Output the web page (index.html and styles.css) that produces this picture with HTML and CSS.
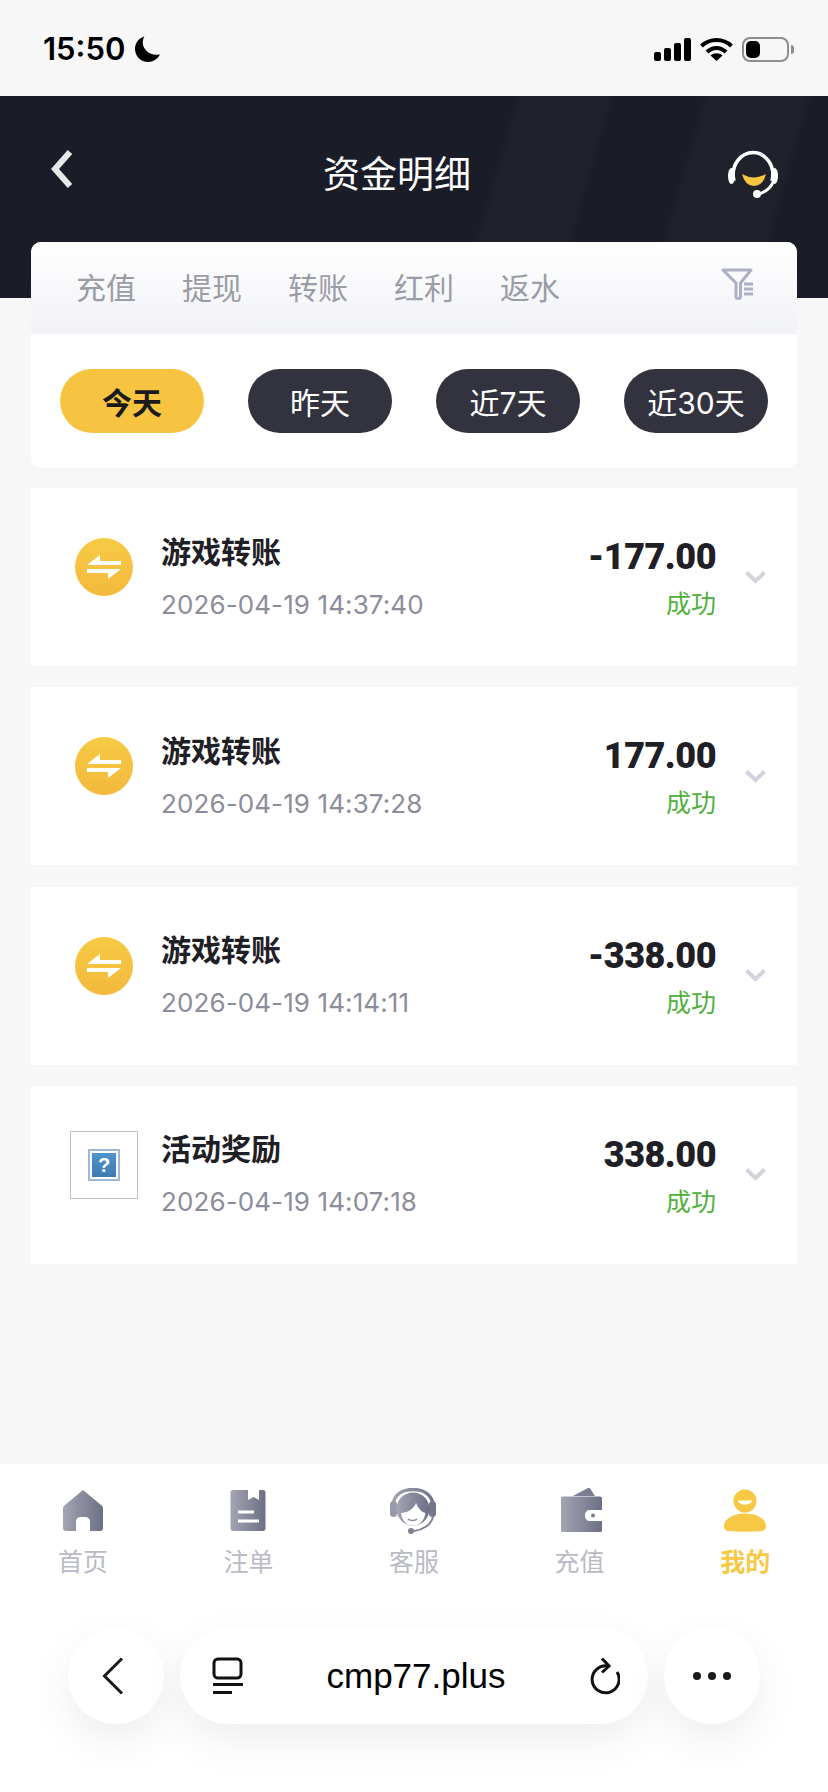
FILE: index.html
```html
<!DOCTYPE html>
<html>
  <head>
    <title>资金明细</title>
    <link rel="stylesheet" href="styles.css">
  </head>
  <body>
    <div class="status-bar">
      <div class="status-left">
        <span class="status-time">15:50</span>
        <svg class="moon" width="26" height="26" viewBox="0 0 25 25"><path d="M9 0.5C3.8 2 0 6.8 0 12.5 0 19.4 5.6 25 12.5 25 17.6 25 22 22 24 17.6 15.5 20 7.5 13.5 7.5 6.5 7.5 4.3 8 2.3 9 0.5Z" fill="#000"/></svg>
      </div>
      <div class="status-right">
        <svg width="37" height="23" viewBox="0 0 37 23" fill="#000"><rect x="0" y="14" width="7" height="9" rx="2"/><rect x="10" y="10" width="7" height="13" rx="2"/><rect x="20" y="5" width="7" height="18" rx="2"/><rect x="30" y="0" width="7" height="23" rx="2"/></svg>
        <svg width="33" height="24" viewBox="0 0 33 24" fill="none" stroke="#000" stroke-width="4"><path d="M1.5 9C10 1 23 1 31.5 9"/><path d="M7 15C12.5 9.5 20.5 9.5 26 15"/><path d="M16.5 24L10.5 18.5C14 15.5 19 15.5 22.5 18.5Z" fill="#000" stroke="none"/></svg>
        <div class="battery-wrap">
          <div class="battery"><div class="battery-fill"></div></div>
          <div class="battery-tip"></div>
        </div>
      </div>
    </div>

    <div class="top-header">
      <svg width="24" height="38" viewBox="0 0 24 38" fill="none" stroke="#e8e8e8" stroke-width="6"><path d="M20 2L5 19L20 36"/></svg>
      <div class="top-title">资金明细</div>
      <svg width="50" height="48" viewBox="0 0 50 48" fill="none">
        <path d="M6 31C2 14 14 2.5 25 2.5S48 14 44 31" stroke="#fff" stroke-width="3.5"/>
        <ellipse cx="3.5" cy="26" rx="3.5" ry="8" fill="#fff"/>
        <ellipse cx="46.5" cy="26" rx="3.5" ry="8" fill="#fff"/>
        <path d="M45 32C43 38 37 42 31 44" stroke="#fff" stroke-width="3"/>
        <circle cx="29" cy="44" r="4" fill="#fff"/>
        <path d="M14 24Q26 31 38 24Q35 36 26 36Q17 36 14 24Z" fill="#f7c441"/>
      </svg>
    </div>

    <div class="filter-card">
      <div class="tabs">
        <span class="tab">充值</span>
        <span class="tab">提现</span>
        <span class="tab">转账</span>
        <span class="tab">红利</span>
        <span class="tab">返水</span>
        <svg class="filter-icon" width="32" height="32" viewBox="0 0 32 32" fill="none" stroke="#adb0c2" stroke-width="3"><path d="M2 2H30L19.5 15V29C19.5 31 15 31 15 29V15Z" stroke-linejoin="round"/><path d="M23 16H32M23 21H32M23 26H32"/></svg>
      </div>
      <div class="pills">
        <span class="pill active">今天</span>
        <span class="pill">昨天</span>
        <span class="pill">近7天</span>
        <span class="pill">近30天</span>
      </div>
    </div>

    <div class="record-list">
      <div class="record">
        <div class="record-icon"><div class="coin"><svg width="34" height="24" viewBox="0 0 34 24" fill="#fff"><path d="M0 10L13 0V6H34V10Z"/><path d="M34 14L21 24V18H0V14Z"/></svg></div></div>
        <div class="record-info">
          <div class="record-name">游戏转账</div>
          <div class="record-date">2026-04-19 14:37:40</div>
        </div>
        <div class="record-money">
          <div class="amount">-177.00</div>
          <div class="state">成功</div>
        </div>
        <svg class="chevron" width="21" height="13" viewBox="0 0 21 13" fill="none" stroke="#d3d3de" stroke-width="4"><path d="M1.5 1.5L10.5 10L19.5 1.5"/></svg>
      </div>
      <div class="record">
        <div class="record-icon"><div class="coin"><svg width="34" height="24" viewBox="0 0 34 24" fill="#fff"><path d="M0 10L13 0V6H34V10Z"/><path d="M34 14L21 24V18H0V14Z"/></svg></div></div>
        <div class="record-info">
          <div class="record-name">游戏转账</div>
          <div class="record-date">2026-04-19 14:37:28</div>
        </div>
        <div class="record-money">
          <div class="amount">177.00</div>
          <div class="state">成功</div>
        </div>
        <svg class="chevron" width="21" height="13" viewBox="0 0 21 13" fill="none" stroke="#d3d3de" stroke-width="4"><path d="M1.5 1.5L10.5 10L19.5 1.5"/></svg>
      </div>
      <div class="record">
        <div class="record-icon"><div class="coin"><svg width="34" height="24" viewBox="0 0 34 24" fill="#fff"><path d="M0 10L13 0V6H34V10Z"/><path d="M34 14L21 24V18H0V14Z"/></svg></div></div>
        <div class="record-info">
          <div class="record-name">游戏转账</div>
          <div class="record-date">2026-04-19 14:14:11</div>
        </div>
        <div class="record-money">
          <div class="amount">-338.00</div>
          <div class="state">成功</div>
        </div>
        <svg class="chevron" width="21" height="13" viewBox="0 0 21 13" fill="none" stroke="#d3d3de" stroke-width="4"><path d="M1.5 1.5L10.5 10L19.5 1.5"/></svg>
      </div>
      <div class="record">
        <div class="record-icon"><div class="broken-img"><div class="broken-mark">?</div></div></div>
        <div class="record-info">
          <div class="record-name">活动奖励</div>
          <div class="record-date">2026-04-19 14:07:18</div>
        </div>
        <div class="record-money">
          <div class="amount">338.00</div>
          <div class="state">成功</div>
        </div>
        <svg class="chevron" width="21" height="13" viewBox="0 0 21 13" fill="none" stroke="#d3d3de" stroke-width="4"><path d="M1.5 1.5L10.5 10L19.5 1.5"/></svg>
      </div>
    </div>

    <svg width="0" height="0" class="defs">
      <defs>
        <linearGradient id="navGrey" x1="0" y1="0" x2="1" y2="0"><stop offset="0" stop-color="#a3a5b3"/><stop offset="1" stop-color="#6d6f86"/></linearGradient>
        <linearGradient id="navGreyLine" gradientUnits="userSpaceOnUse" x1="0" y1="0" x2="48" y2="0"><stop offset="0" stop-color="#a3a5b3"/><stop offset="1" stop-color="#6d6f86"/></linearGradient>
      </defs>
    </svg>

    <div class="bottom-nav">
      <div class="nav-item">
        <svg width="48" height="46" viewBox="0 0 48 46"><path d="M24 2L42 17C43.5 18 44 19 44 21V40C44 42 43 43 41 43H31V34C31 30.5 29 29 26 29H22C19 29 17 30.5 17 34V43H7C5 43 4 42 4 40V21C4 19 4.5 18 6 17Z" fill="url(#navGrey)"/></svg>
        <span class="nav-label">首页</span>
      </div>
      <div class="nav-item">
        <svg width="48" height="46" viewBox="0 0 48 46"><path d="M9 2H24V12L29.5 9L35 12V2H39C40.5 2 41.5 3 41.5 4.5V40.5C41.5 42 40.5 43 39 43H9C7.5 43 6.5 42 6.5 40.5V4.5C6.5 3 7.5 2 9 2Z" fill="url(#navGrey)"/><path d="M14 22.5H30V25.5H14ZM14 31.5H35V34.5H14Z" fill="#fff"/></svg>
        <span class="nav-label">注单</span>
      </div>
      <div class="nav-item">
        <svg width="48" height="46" viewBox="0 0 48 46" fill="none">
          <path d="M3 16C5 6 13 1.5 23 1.5S41 6 43 16" stroke="url(#navGreyLine)" stroke-width="3.5"/>
          <rect x="0" y="13" width="7" height="16" rx="3.5" fill="#989aaa"/>
          <rect x="39" y="13" width="7" height="16" rx="3.5" fill="#75778c"/>
          <circle cx="23" cy="21" r="16.5" fill="url(#navGrey)"/>
          <path d="M11 25C17 25 24 21 26 15C28 20 31 24 35.5 25C34.5 33 29 37.5 23 37.5S12 33 11 25Z" fill="#fff"/>
          <path d="M18 31C20 33 25 33 27 31" stroke="#8a8c9e" stroke-width="1.5"/>
          <path d="M43 28C42 37 32 42 24 43" stroke="#7f8196" stroke-width="2"/>
          <circle cx="21" cy="43" r="3" fill="#7f8196"/>
        </svg>
        <span class="nav-label">客服</span>
      </div>
      <div class="nav-item">
        <svg width="48" height="46" viewBox="0 0 48 46"><path d="M17 8L32 0C33 -0.5 34 0 34.5 1L39 8Z" fill="#7b7d92"/><path d="M5 10C5 9 6 8.5 7 8.5H44C45.5 8.5 46 9.5 46 10.5V22H34C31 22 29 24 29 27.5S31 33 34 33H46V42C46 43.5 45.5 44 44 44H7C6 44 5 43.5 5 42Z" fill="url(#navGrey)"/><circle cx="37" cy="27.5" r="2" fill="#7b7d92"/></svg>
        <span class="nav-label">充值</span>
      </div>
      <div class="nav-item current">
        <svg width="48" height="46" viewBox="0 0 48 46" fill="#f7c843"><path d="M24 1.5A11.5 11.5 0 1 1 24 24.5A11.5 11.5 0 1 1 24 1.5ZM17 12.5C17.5 18 30.5 18 31 12.5Z" fill-rule="evenodd"/><path d="M3 38C3 31 12 25.5 24 25.5S45 31 45 38C45 41 43.5 42.5 41 43C30 44 18 44 7 43C4.5 42.5 3 41 3 38Z"/></svg>
        <span class="nav-label">我的</span>
      </div>
    </div>

    <div class="browser-bar">
      <div class="browser-round">
        <svg class="browser-back" width="22" height="38" viewBox="0 0 22 38" fill="none" stroke="#1a1a1a" stroke-width="3"><path d="M20 1.5L2.5 19L20 36.5"/></svg>
      </div>
      <div class="browser-url">
        <svg width="32" height="38" viewBox="0 0 32 38" fill="none" stroke="#111" stroke-width="3"><rect x="2" y="2" width="27" height="19" rx="4"/><path d="M1 27.5H31"/><path d="M1 35.5H20"/></svg>
        <span class="url-text">cmp77.plus</span>
        <svg width="32" height="38" viewBox="0 0 32 38" fill="none" stroke="#111" stroke-width="3"><path d="M20 9A13.5 13.5 0 1 0 29 15"/><path d="M14 1.5L21 9L14 15.5"/></svg>
      </div>
      <div class="browser-round">
        <div class="dots"><i></i><i></i><i></i></div>
      </div>
    </div>
  </body>
</html>
```

FILE: styles.css
```css
html, body {
  margin: 0;
  padding: 0;
}
body {
  width: 828px;
  height: 1792px;
  overflow: hidden;
  display: flex;
  flex-direction: column;
  background: #f7f7f7;
  font-family: "Inter", "Noto Sans CJK SC", sans-serif;
}
.defs {
  flex: none;
}

/* status bar */
.status-bar {
  height: 96px;
  flex: none;
  display: flex;
  justify-content: space-between;
  align-items: center;
  padding: 2px 34px 0 43px;
  box-sizing: border-box;
}
.status-left {
  display: flex;
  align-items: center;
  gap: 10px;
}
.status-time {
  font-size: 31px;
  font-weight: 600;
  color: #000;
  line-height: 36px;
}
.status-right {
  display: flex;
  align-items: center;
  gap: 9px;
}
.battery-wrap {
  display: flex;
  align-items: center;
  gap: 2px;
}
.battery {
  width: 47px;
  height: 25px;
  box-sizing: border-box;
  border: 2px solid #8e8e8e;
  border-radius: 8px;
  padding: 2px;
}
.battery-fill {
  width: 14px;
  height: 100%;
  background: #000;
  border-radius: 5px;
}
.battery-tip {
  width: 3px;
  height: 9px;
  background: #8e8e8e;
  border-radius: 0 3px 3px 0;
}

/* header */
.top-header {
  height: 202px;
  flex: none;
  box-sizing: border-box;
  padding: 54px 50px 0;
  display: flex;
  justify-content: space-between;
  align-items: flex-start;
  background: linear-gradient(106deg,
    #1a1d27 495px, #1f222b 502px, #1f222b 585px, #1a1d27 591px,
    #1a1d27 675px, #1f222b 682px, #1f222b 775px, #1a1d27 781px);
}
.top-title {
  font-size: 37px;
  color: #fff;
  line-height: 50px;
  margin-right: 8px;
}

/* filter card */
.filter-card {
  margin: -56px 31px 0;
  flex: none;
  background: #fff;
  border-radius: 10px;
  overflow: hidden;
}
.tabs {
  height: 92px;
  box-sizing: border-box;
  display: flex;
  align-items: center;
  padding: 0 44px 4px 45px;
  gap: 46px;
  background: linear-gradient(180deg, #fff 0%, #f1f2f7 100%);
}
.tab {
  font-size: 30px;
  color: #9a9ca6;
}
.filter-icon {
  margin-left: auto;
  margin-bottom: 4px;
}
.pills {
  height: 134px;
  display: flex;
  align-items: center;
  justify-content: space-between;
  padding: 0 29px;
}
.pill {
  width: 144px;
  height: 64px;
  border-radius: 32px;
  background: #32333f;
  color: #fff;
  font-size: 30px;
  display: flex;
  align-items: center;
  justify-content: center;
}
.pill.active {
  background: #f7c441;
  color: #1a1a1a;
  font-weight: 700;
}

/* records */
.record-list {
  flex: 1;
  margin: 20px 31px 0;
  display: flex;
  flex-direction: column;
  gap: 21.33px;
}
.record {
  height: 178px;
  background: #fff;
  display: flex;
  align-items: center;
  padding: 0 31px 0 39px;
}
.record-icon {
  width: 68px;
  height: 68px;
  flex: none;
  margin-right: 23px;
  margin-bottom: 20px;
  display: flex;
  align-items: center;
  justify-content: center;
}
.coin {
  width: 58px;
  height: 58px;
  border-radius: 50%;
  background: linear-gradient(180deg, #f7cb45 0%, #f3b93c 100%);
  display: flex;
  align-items: center;
  justify-content: center;
}
.broken-img {
  width: 68px;
  height: 68px;
  box-sizing: border-box;
  border: 1px solid #c0c0c0;
  display: flex;
  align-items: center;
  justify-content: center;
}
.broken-mark {
  width: 32px;
  height: 32px;
  box-sizing: border-box;
  border: 2px solid #9db8d8;
  outline: 2px solid #fff;
  outline-offset: -4px;
  background: linear-gradient(180deg, #4f97cf 0%, #3f78b2 100%);
  color: #fff;
  font-family: "Liberation Sans", sans-serif;
  font-size: 20px;
  font-weight: 700;
  line-height: 28px;
  text-align: center;
}
.record-info {
  flex: 1;
}
.record-name {
  font-size: 30px;
  font-weight: 700;
  color: #1f2026;
  line-height: 40px;
}
.record-date {
  margin-top: 15px;
  font-size: 26px;
  letter-spacing: 0.1px;
  color: #8b8d9b;
  line-height: 36px;
}
.record-money {
  text-align: right;
  margin-right: 29px;
}
.amount {
  font-family: "Roboto", sans-serif;
  font-size: 36px;
  font-weight: 900;
  color: #1f2026;
  line-height: 42px;
  letter-spacing: -0.5px;
  margin-top: 4px;
}
.state {
  margin-top: 8px;
  font-size: 25px;
  color: #4fb13a;
  line-height: 36px;
}
.chevron {
  flex: none;
}

/* bottom nav */
.bottom-nav {
  flex: none;
  height: 130px;
  box-sizing: border-box;
  background: #fff;
  padding-top: 24px;
  display: flex;
}
.nav-item {
  flex: 1;
  display: flex;
  flex-direction: column;
  align-items: center;
}
.nav-label {
  margin-top: 10px;
  font-size: 25px;
  color: #b9bac6;
  line-height: 36px;
}
.nav-item.current .nav-label {
  color: #f7c843;
  font-weight: 700;
}

/* browser bar */
.browser-bar {
  flex: none;
  height: 198px;
  box-sizing: border-box;
  background: #fff;
  padding: 34px 68px 0;
  display: flex;
  gap: 16px;
  align-items: flex-start;
}
.browser-round {
  width: 96px;
  height: 96px;
  flex: none;
  border-radius: 50%;
  background: #fff;
  box-shadow: 0 16px 44px rgba(0, 0, 0, 0.07);
  display: flex;
  align-items: center;
  justify-content: center;
}
.browser-back {
  margin-right: 6px;
}
.browser-url {
  flex: 1;
  height: 96px;
  border-radius: 48px;
  background: #fff;
  box-shadow: 0 16px 44px rgba(0, 0, 0, 0.07);
  display: flex;
  align-items: center;
  justify-content: space-between;
  padding: 0 28px 0 32px;
}
.url-text {
  font-family: "Liberation Sans", sans-serif;
  font-size: 35px;
  color: #000;
}
.dots {
  display: flex;
  gap: 7px;
}
.dots i {
  width: 8px;
  height: 8px;
  border-radius: 50%;
  background: #1a1a1a;
}
```
